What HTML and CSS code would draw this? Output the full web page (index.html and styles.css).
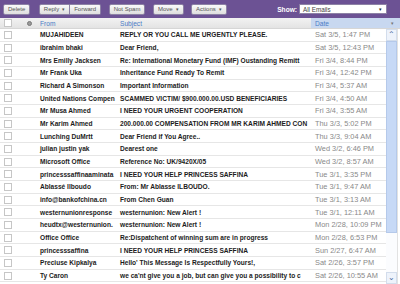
FILE: index.html
```html
<!DOCTYPE html>
<html lang="en">
<head>
    <meta charset="UTF-8">
    <title>Inbox</title>
    <link rel="stylesheet" href="styles.css">
</head>
<body>

    <!-- Toolbar -->
    <div class="toolbar">
        <button class="btn">Delete</button>
        <div class="btn-group">
            <button class="btn">Reply <span class="caret">&#9662;</span></button>
            <button class="btn">Forward</button>
        </div>
        <button class="btn">Not Spam</button>
        <button class="btn">Move <span class="caret">&#9662;</span></button>
        <button class="btn">Actions <span class="caret">&#9662;</span></button>
        <div class="show">
            <label>Show:</label>
            <div class="select">All Emails <span class="caret">&#9662;</span></div>
        </div>
    </div>

    <!-- Column headers -->
    <div class="head">
        <div class="cell check"><span class="box"></span></div>
        <div class="cell icon"><span class="dot"></span></div>
        <div class="cell from">From</div>
        <div class="cell subject">Subject</div>
        <div class="cell date">Date <span class="caret">&#9662;</span></div>
    </div>

    <!-- Message list -->
    <div class="main">
        <div class="list" id="list"></div>
        <div class="scrollbar">
            <div class="arrow">&#8963;</div>
            <div class="thumb"></div>
            <div class="track"></div>
            <div class="arrow down">&#8964;</div>
        </div>
    </div>

    <script>
        let messages = [
            ["MUJAHIDEEN", "REPLY OR YOU CALL ME URGENTLY PLEASE.", "Sat 3/5, 1:47 PM"],
            ["ibrahim bhaki", "Dear Friend,", "Sat 3/5, 12:43 PM"],
            ["Mrs Emilly Jacksen", "Re: International Monetary Fund (IMF) Oustanding Remitt", "Fri 3/4, 8:44 PM"],
            ["Mr Frank Uka", "Inheritance Fund Ready To Remit", "Fri 3/4, 12:42 PM"],
            ["Richard A Simonson", "Important Information", "Fri 3/4, 5:37 AM"],
            ["United Nations Compen", "SCAMMED VICTIM/ $900.000.00.USD BENEFICIARIES", "Fri 3/4, 4:50 AM"],
            ["Mr Musa Ahmed", "I NEED YOUR URGENT COOPERATION", "Fri 3/4, 3:55 AM"],
            ["Mr Karim Ahmed", "200.000.00 COMPENSATION FROM MR KARIM AHMED CON", "Thu 3/3, 5:02 PM"],
            ["Lunching DuMrtt", "Dear Friend if You Agree..", "Thu 3/3, 9:04 AM"],
            ["julian justin yak", "Dearest one", "Wed 3/2, 6:46 PM"],
            ["Microsoft Office", "Reference No: UK/9420X/05", "Wed 3/2, 8:57 AM"],
            ["princesssaffinaaminata", "I NEED YOUR HELP PRINCESS SAFFINA", "Tue 3/1, 3:35 PM"],
            ["Ablassé Ilboudo", "From: Mr Ablasse ILBOUDO.", "Tue 3/1, 9:47 AM"],
            ["info@bankofchina.cn", "From Chen Guan", "Tue 3/1, 3:13 AM"],
            ["westernunionresponse", "westernunion: New Alert !", "Tue 3/1, 12:11 AM"],
            ["heudtx@westernunion.", "westernunion: New Alert !", "Mon 2/28, 10:09 PM"],
            ["Office Office", "Re:Dispatchent of winning sum are in progress", "Mon 2/28, 6:53 PM"],
            ["princesssaffina", "I NEED YOUR HELP PRINCESS SAFFINA", "Sun 2/27, 6:47 AM"],
            ["Preciuse Kipkalya", "Hello' This Message Is Respectfully Yours!,", "Sat 2/26, 3:57 PM"],
            ["Ty Caron", "we ca'nt give you a job, but can give you a possibility to c", "Sat 2/26, 10:55 AM"],
            ["", "", ""]
        ];

        let list = document.getElementById('list');
        messages.forEach(m => {
            list.innerHTML += `<div class="row">
                                   <div class="cell check"><span class="box"></span></div>
                                   <div class="cell icon"></div>
                                   <div class="cell from">${m[0]}</div>
                                   <div class="cell subject">${m[1]}</div>
                                   <div class="cell date">${m[2]}</div>
                               </div>`;
        });
    </script>
</body>
</html>
```

FILE: styles.css
```css
* {
    margin: 0;
    padding: 0;
    box-sizing: border-box;
}

body {
    font-family: 'Liberation Sans', Arial, sans-serif;
    width: 400px;
    height: 284px;
    overflow: hidden;
    background: #fff;
    color: #222;
}

/* Toolbar */
.toolbar {
    height: 18px;
    background: #6c5294;
    display: flex;
    align-items: center;
    padding: 0 3px;
    gap: 7.5px;
}

.btn {
    height: 11px;
    padding: 0 4px;
    font-family: inherit;
    font-size: 6px;
    color: #555;
    background: linear-gradient(#fafafa, #dedede);
    border: 1px solid #8d82a5;
    border-radius: 2px;
    display: flex;
    align-items: center;
    gap: 3px;
}

.btn-group {
    display: flex;
    margin-left: 1px;
}

.btn-group .btn:first-child {
    border-radius: 2px 0 0 2px;
}

.btn-group .btn:last-child {
    border-left: none;
    border-radius: 0 2px 2px 0;
}

.caret {
    font-size: 4.5px;
    color: #555;
}

.show {
    margin-left: auto;
    display: flex;
    align-items: center;
    gap: 2px;
    margin-right: 10px;
}

.show label {
    color: #fff;
    font-weight: bold;
    font-size: 6.6px;
}

.select {
    width: 88px;
    height: 10px;
    background: #fff;
    border: 1px solid #8d82a5;
    font-size: 6.3px;
    color: #444;
    display: flex;
    align-items: center;
    justify-content: space-between;
    padding: 0 4px 0 3px;
}

.select .caret {
    color: #222;
}

/* Column rows */
.head,
.row {
    display: flex;
    align-items: center;
}

.head {
    height: 11px;
    background: linear-gradient(#f2f2f2, #e3e3e3);
    border-bottom: 1px solid #d6d6d6;
    font-size: 6.6px;
    color: #4a7cc6;
}

.cell {
    height: 100%;
    display: flex;
    align-items: center;
    white-space: nowrap;
    overflow: hidden;
}

.check {
    width: 24px;
    padding-left: 4px;
}

.box {
    width: 8px;
    height: 8px;
    background: #fff;
    border: 1px solid #c6c6c6;
}

.icon {
    width: 13px;
    padding-left: 3px;
}

.dot {
    width: 5px;
    height: 5px;
    border-radius: 50%;
    background: #999;
    border: 1px solid #777;
}

.from {
    width: 80px;
    padding-left: 3px;
}

.subject {
    width: 194px;
    padding-left: 3px;
}

.date {
    flex: 1;
    padding-left: 4px;
}

.head .date {
    background: #c8d8f0;
    justify-content: space-between;
    padding-right: 6px;
}

.head .date .caret {
    color: #777;
}

/* Message list */
.main {
    display: flex;
    height: 255px;
}

.list {
    width: 386px;
    overflow: hidden;
}

.row {
    height: 12.68px;
    border-bottom: 1px solid #e6e6e6;
    font-size: 6.6px;
    font-weight: bold;
    color: #1c1c1c;
}

.row .date {
    font-weight: normal;
    font-size: 7.4px;
    color: #888;
}

.scrollbar {
    width: 12px;
    display: flex;
    flex-direction: column;
    border-right: 1px solid #e2e2e2;
}

.arrow {
    height: 12px;
    background: #eef3fb;
    border: 1px solid #d3ddec;
    font-size: 8px;
    color: #4b6b9c;
    display: flex;
    justify-content: center;
    align-items: center;
    line-height: 1;
}

.thumb {
    height: 192px;
    background: #c7d9f6;
    border: 1px solid #b5c9ea;
}

.track {
    flex: 1;
    background: #fbfcfe;
}
```
